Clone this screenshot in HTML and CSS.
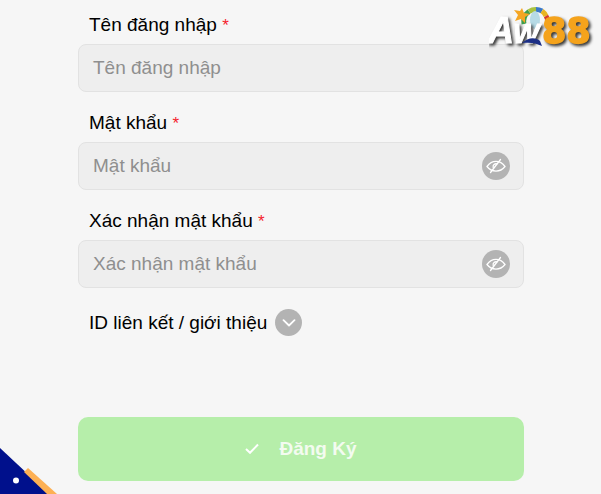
FILE: index.html
```html
<!DOCTYPE html>
<html lang="vi">
<head>
<meta charset="utf-8">
<title>Đăng Ký</title>
<link rel="stylesheet" href="styles.css">
</head>
<body>
<main class="page">
  <form class="form">
    <div class="field">
      <label class="label">Tên đăng nhập <span class="req">*</span></label>
      <div class="input"><span class="ph">Tên đăng nhập</span></div>
    </div>
    <div class="field">
      <label class="label">Mật khẩu <span class="req">*</span></label>
      <div class="input"><span class="ph">Mật khẩu</span>
        <span class="round eye"><svg width="20" height="16" viewBox="0 0 20 16" fill="none" stroke="#fff" stroke-width="1.3" stroke-linecap="round"><path d="M1 8.500C3.500 5 6.500 3.400 10 3.400s6.500 1.600 9 5.100c-2.500 3.100-5.500 4.600-9 4.600s-6.500-1.500-9-4.600z"/><path d="M14.500 1.500 4.500 14.500"/><path d="M7.200 9.500a3 3 0 0 1 3.800-3.600"/></svg></span>
      </div>
    </div>
    <div class="field">
      <label class="label">Xác nhận mật khẩu <span class="req">*</span></label>
      <div class="input"><span class="ph">Xác nhận mật khẩu</span>
        <span class="round eye"><svg width="20" height="16" viewBox="0 0 20 16" fill="none" stroke="#fff" stroke-width="1.3" stroke-linecap="round"><path d="M1 8.500C3.500 5 6.500 3.400 10 3.400s6.500 1.600 9 5.100c-2.500 3.100-5.500 4.600-9 4.600s-6.500-1.500-9-4.600z"/><path d="M14.500 1.500 4.500 14.500"/><path d="M7.200 9.500a3 3 0 0 1 3.800-3.600"/></svg></span>
      </div>
    </div>
    <div class="ref">
      <span>ID liên kết / giới thiệu</span>
      <span class="round toggle"><svg width="14" height="8" viewBox="0 0 14 8" fill="none" stroke="#fff" stroke-width="1.800" stroke-linecap="round" stroke-linejoin="round"><path d="M1.500 1.200 7 6.500l5.500-5.300"/></svg></span>
    </div>
    <button class="submit" type="button">
      <svg width="14" height="11" viewBox="0 0 14 11" fill="none" stroke="#fff" stroke-width="2"><path d="M1 6l4 3.800L13 1.500"/></svg>
      <span>Đăng Ký</span>
    </button>
  </form>
</main>
<svg class="logo" width="112" height="54" viewBox="0 0 112 54">
  <g fill="none" stroke-width="5">
    <path d="M35 24A12.500 12.500 0 0 1 40 11.500" stroke="#3f9e4d"/>
    <path d="M40 11.500A12.500 12.500 0 0 1 47 9.500" stroke="#a9c23f"/>
    <path d="M47 9.500A12.500 12.500 0 0 1 53 11" stroke="#3a78c8"/>
    <path d="M53 11A12.500 12.500 0 0 1 57 16" stroke="#e8b522"/>
    <path d="M57 16A12.500 12.500 0 0 1 59 24" stroke="#d63a2d"/>
  </g>
  <ellipse cx="46" cy="20" rx="5" ry="9" fill="#b7dbe6"/>
  <path d="M33 8l2 5 6 1-5 3 0 6-4-4-6 2 3-6-4-5 6 1z" fill="#f5a623"/>
  <g class="logo-text">
    <text class="logo-a" x="-1" y="43">A</text>
    <text class="logo-w" x="24" y="43">W</text>
    <text class="logo-8" x="53" y="43">88</text>
  </g>
  <path d="M33 43c6-6 14-6 18-2l2 5c-6-3-12-4-20-3z" fill="#1c2f86"/>
</svg>
<svg class="corner" width="58" height="48" viewBox="0 0 58 48">
  <path d="M0 2 47 46 49 48 0 48z" fill="#00108c"/>
  <path d="M24 26 28 22 57 48 47 48z" fill="#fdb054"/>
  <circle cx="16" cy="34.500" r="3" fill="#fff"/>
</svg>
</body>
</html>
```
FILE: styles.css
```css
html, body {
  margin: 0;
  height: 100%;
}
body {
  background: #f6f6f6;
  font-family: "Liberation Sans", Arial, sans-serif;
  overflow: hidden;
  position: relative;
}
.page {
  display: flex;
  padding-left: 78px;
}
.form {
  width: 446px;
  display: flex;
  flex-direction: column;
}
.field {
  display: flex;
  flex-direction: column;
  margin-bottom: 6px;
}
.label {
  height: 44px;
  padding: 14px 0 0 11px;
  box-sizing: border-box;
  font-size: 19px;
  line-height: 21px;
  color: #000;
}
.req {
  color: #f5222d;
  font-size: 17px;
}
.input {
  height: 48px;
  box-sizing: border-box;
  background: #eeeeee;
  border: 1px solid #e2e2e2;
  border-radius: 8px;
  padding: 0 13px 1px 14px;
  display: flex;
  align-items: center;
  justify-content: space-between;
  font-size: 19px;
  color: #8f8f8f;
}
.round {
  display: flex;
  align-items: center;
  justify-content: center;
  border-radius: 50%;
  background: #b3b3b3;
}
.eye {
  width: 28px;
  height: 28px;
  margin-top: 1px;
}
.toggle {
  width: 27px;
  height: 27px;
  margin-left: 8px;
}
.ref {
  display: flex;
  align-items: center;
  height: 27px;
  margin-top: 15px;
  padding-left: 11px;
  font-size: 19px;
  color: #000;
}
.submit {
  margin-top: 81px;
  height: 64px;
  border: 0;
  border-radius: 10px;
  background: #b6eeaa;
  color: #f3fbf0;
  font-family: inherit;
  font-size: 19px;
  font-weight: 700;
  display: flex;
  align-items: center;
  justify-content: center;
  gap: 20px;
  padding-top: 0;
}
.logo {
  position: absolute;
  left: 489px;
  top: 0;
}
.logo-text {
  filter: drop-shadow(2px 2px 1.500px rgba(20, 20, 20, 0.85));
  font-weight: 700;
}
.logo-a {
  fill: #fff;
  stroke: #fff;
  stroke-width: 1px;
  font-family: "Liberation Sans", Arial, sans-serif;
  font-style: italic;
  font-size: 36px;
}
.logo-w {
  fill: #fff;
  stroke: #fff;
  stroke-width: 1px;
  font-family: "Liberation Sans", Arial, sans-serif;
  font-style: italic;
  font-size: 28px;
}
.logo-8 {
  fill: #f5a31c;
  stroke: #f5a31c;
  stroke-width: 1.500px;
  font-family: "DejaVu Sans", sans-serif;
  font-size: 35px;
}
.corner {
  position: absolute;
  left: 0;
  top: 446px;
}
```
